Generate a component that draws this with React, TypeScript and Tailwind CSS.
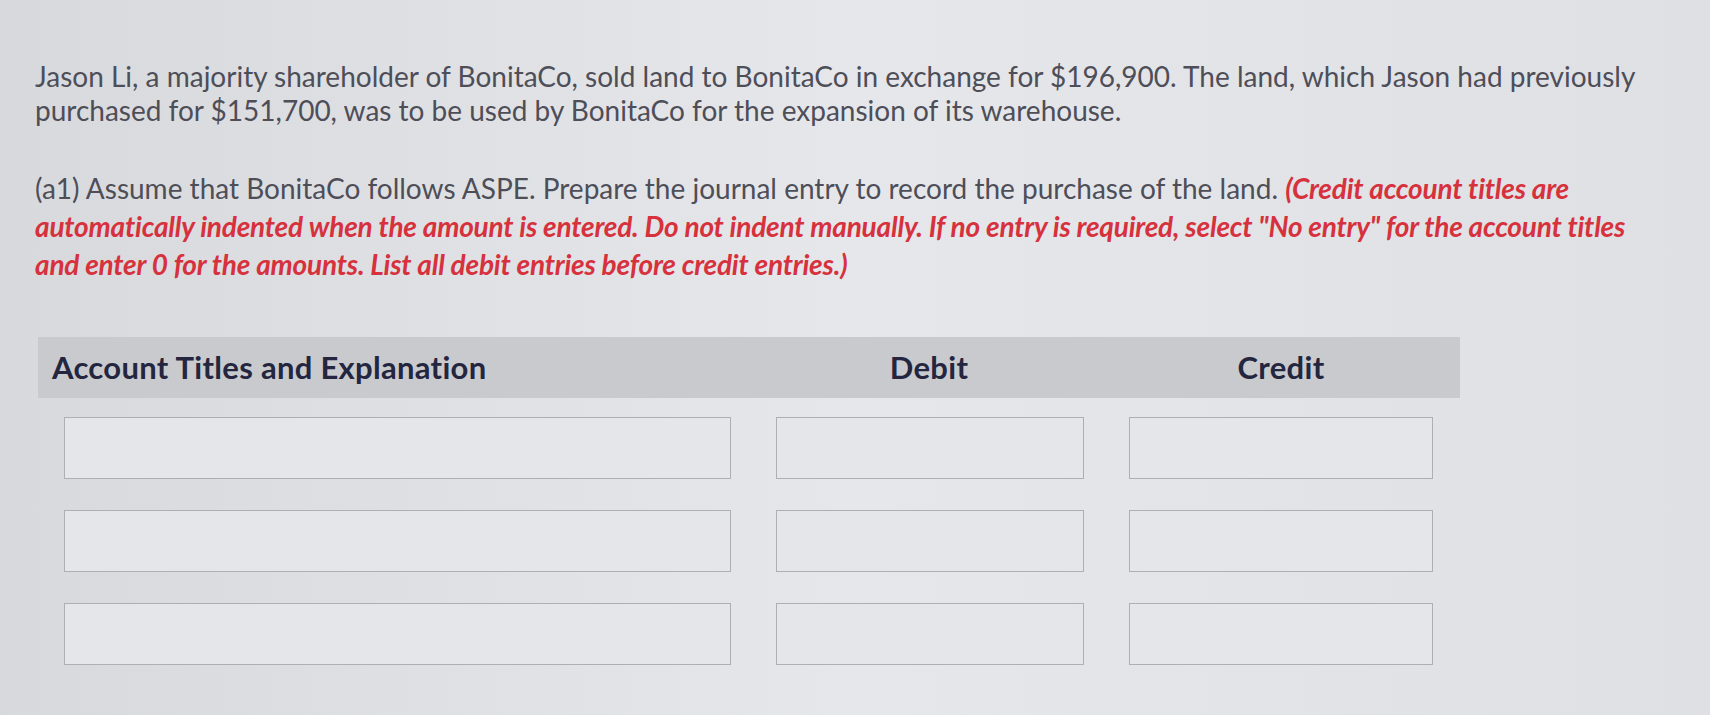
import React from "react";

const Box = ({ w }: { w: string }) => (
  <div className={`${w} h-[62px] border border-[#aeafb3] bg-[#e5e6ea]`} />
);

export default function App() {
  return (
    <div
      className="w-[1710px] h-[715px] overflow-hidden bg-gradient-to-r from-[#d8d9dd] via-[#e6e7eb] to-[#dfe0e4] text-[#4e4e58]"
      style={{ fontFamily: "Lato, 'Noto Sans', sans-serif" }}
    >
      <div className="pl-[35px] pt-[59px]">
        <div className="text-[28px] leading-[34px] whitespace-nowrap">
          <div>
            Jason Li, a majority shareholder of BonitaCo, sold land to BonitaCo in exchange for $196,900. The land, which Jason had previously
          </div>
          <div>purchased for $151,700, was to be used by BonitaCo for the expansion of its warehouse.</div>
        </div>
        <div className="mt-[42px] text-[28px] leading-[38px] whitespace-nowrap">
          <div>
            (a1) Assume that BonitaCo follows ASPE. Prepare the journal entry to record the purchase of the land.{" "}
            <span className="font-bold italic text-[#d6313c] tracking-[-0.2px]">(Credit account titles are</span>
          </div>
          <div className="font-bold italic text-[#d6313c] tracking-[-0.2px]">
            automatically indented when the amount is entered. Do not indent manually. If no entry is required, select "No entry" for the account titles
          </div>
          <div className="font-bold italic text-[#d6313c] tracking-[-0.2px]">
            and enter 0 for the amounts. List all debit entries before credit entries.)
          </div>
        </div>
        <div className="mt-[54px] ml-[3px] w-[1422px]">
          <div className="flex items-center h-[61px] bg-[#c9cace] text-[#242640] font-bold text-[31px] tracking-[0.3px]">
            <div className="w-[737px] pl-[14px]">Account Titles and Explanation</div>
            <div className="w-[308px] text-center">Debit</div>
            <div className="w-[46px]" />
            <div className="w-[304px] text-center">Credit</div>
          </div>
          <div className="flex flex-col gap-[31px] pt-[19px] pl-[26px]">
            {[0, 1, 2].map((i) => (
              <div key={i} className="flex gap-[45px]">
                <Box w="w-[667px]" />
                <Box w="w-[308px]" />
                <Box w="w-[304px]" />
              </div>
            ))}
          </div>
        </div>
      </div>
    </div>
  );
}
